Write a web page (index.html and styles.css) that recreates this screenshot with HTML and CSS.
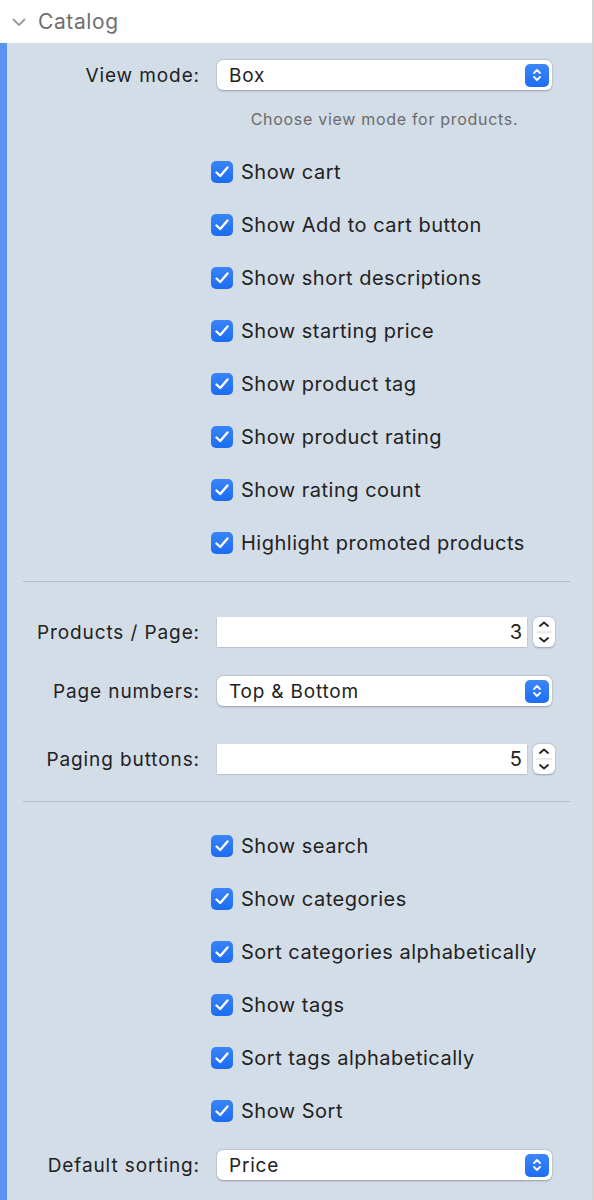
FILE: index.html
```html
<!DOCTYPE html>
<html>
<head>
<meta charset="utf-8">
<link rel="stylesheet" href="styles.css">
</head>
<body>
<div class="header">
  <svg class="disclosure" width="14" height="9" viewBox="0 0 14 9"><path d="M1.5 1.5 L7 7 L12.5 1.5" fill="none" stroke="#9b9b9b" stroke-width="1.8" stroke-linecap="round" stroke-linejoin="round"/></svg>
  <span class="title">Catalog</span>
</div>
<div class="panel">
  <div class="row first">
    <div class="label">View mode:</div>
    <div class="select"><span>Box</span><span class="popbtn"><svg width="12" height="16" viewBox="0 0 12 16"><path d="M3 6 L6 3 L9 6 M3 10 L6 13 L9 10" fill="none" stroke="#fff" stroke-width="1.8" stroke-linecap="round" stroke-linejoin="round"/></svg></span></div>
  </div>
  <div class="help">Choose view mode for products.</div>

  <div class="checks">
    <div class="check"><span class="box"><svg width="16" height="14" viewBox="0 0 16 14"><path d="M2.5 7.5 L6.2 11 L13.5 2.5" fill="none" stroke="#fff" stroke-width="2.4" stroke-linecap="round" stroke-linejoin="round"/></svg></span>Show cart</div>
    <div class="check"><span class="box"><svg width="16" height="14" viewBox="0 0 16 14"><path d="M2.5 7.5 L6.2 11 L13.5 2.5" fill="none" stroke="#fff" stroke-width="2.4" stroke-linecap="round" stroke-linejoin="round"/></svg></span>Show Add to cart button</div>
    <div class="check"><span class="box"><svg width="16" height="14" viewBox="0 0 16 14"><path d="M2.5 7.5 L6.2 11 L13.5 2.5" fill="none" stroke="#fff" stroke-width="2.4" stroke-linecap="round" stroke-linejoin="round"/></svg></span>Show short descriptions</div>
    <div class="check"><span class="box"><svg width="16" height="14" viewBox="0 0 16 14"><path d="M2.5 7.5 L6.2 11 L13.5 2.5" fill="none" stroke="#fff" stroke-width="2.4" stroke-linecap="round" stroke-linejoin="round"/></svg></span>Show starting price</div>
    <div class="check"><span class="box"><svg width="16" height="14" viewBox="0 0 16 14"><path d="M2.5 7.5 L6.2 11 L13.5 2.5" fill="none" stroke="#fff" stroke-width="2.4" stroke-linecap="round" stroke-linejoin="round"/></svg></span>Show product tag</div>
    <div class="check"><span class="box"><svg width="16" height="14" viewBox="0 0 16 14"><path d="M2.5 7.5 L6.2 11 L13.5 2.5" fill="none" stroke="#fff" stroke-width="2.4" stroke-linecap="round" stroke-linejoin="round"/></svg></span>Show product rating</div>
    <div class="check"><span class="box"><svg width="16" height="14" viewBox="0 0 16 14"><path d="M2.5 7.5 L6.2 11 L13.5 2.5" fill="none" stroke="#fff" stroke-width="2.4" stroke-linecap="round" stroke-linejoin="round"/></svg></span>Show rating count</div>
    <div class="check"><span class="box"><svg width="16" height="14" viewBox="0 0 16 14"><path d="M2.5 7.5 L6.2 11 L13.5 2.5" fill="none" stroke="#fff" stroke-width="2.4" stroke-linecap="round" stroke-linejoin="round"/></svg></span>Highlight promoted products</div>
  </div>

  <div class="sep sep1"></div>

  <div class="row r-products">
    <div class="label">Products / Page:</div>
    <div class="numfield"><div class="field">3</div><div class="stepper"><svg width="22" height="30" viewBox="0 0 22 30"><path d="M7 9 L11 5.5 L15 9 M7 21 L11 24.5 L15 21" fill="none" stroke="#222" stroke-width="1.8" stroke-linecap="round" stroke-linejoin="round"/><line x1="3" y1="15" x2="19" y2="15" stroke="#d8d8d8" stroke-width="1"/></svg></div></div>
  </div>
  <div class="row r-pagenum">
    <div class="label">Page numbers:</div>
    <div class="select"><span>Top &amp; Bottom</span><span class="popbtn"><svg width="12" height="16" viewBox="0 0 12 16"><path d="M3 6 L6 3 L9 6 M3 10 L6 13 L9 10" fill="none" stroke="#fff" stroke-width="1.8" stroke-linecap="round" stroke-linejoin="round"/></svg></span></div>
  </div>
  <div class="row r-paging">
    <div class="label">Paging buttons:</div>
    <div class="numfield"><div class="field">5</div><div class="stepper"><svg width="22" height="30" viewBox="0 0 22 30"><path d="M7 9 L11 5.5 L15 9 M7 21 L11 24.5 L15 21" fill="none" stroke="#222" stroke-width="1.8" stroke-linecap="round" stroke-linejoin="round"/><line x1="3" y1="15" x2="19" y2="15" stroke="#d8d8d8" stroke-width="1"/></svg></div></div>
  </div>

  <div class="sep sep2"></div>

  <div class="checks checks2">
    <div class="check"><span class="box"><svg width="16" height="14" viewBox="0 0 16 14"><path d="M2.5 7.5 L6.2 11 L13.5 2.5" fill="none" stroke="#fff" stroke-width="2.4" stroke-linecap="round" stroke-linejoin="round"/></svg></span>Show search</div>
    <div class="check"><span class="box"><svg width="16" height="14" viewBox="0 0 16 14"><path d="M2.5 7.5 L6.2 11 L13.5 2.5" fill="none" stroke="#fff" stroke-width="2.4" stroke-linecap="round" stroke-linejoin="round"/></svg></span>Show categories</div>
    <div class="check"><span class="box"><svg width="16" height="14" viewBox="0 0 16 14"><path d="M2.5 7.5 L6.2 11 L13.5 2.5" fill="none" stroke="#fff" stroke-width="2.4" stroke-linecap="round" stroke-linejoin="round"/></svg></span>Sort categories alphabetically</div>
    <div class="check"><span class="box"><svg width="16" height="14" viewBox="0 0 16 14"><path d="M2.5 7.5 L6.2 11 L13.5 2.5" fill="none" stroke="#fff" stroke-width="2.4" stroke-linecap="round" stroke-linejoin="round"/></svg></span>Show tags</div>
    <div class="check"><span class="box"><svg width="16" height="14" viewBox="0 0 16 14"><path d="M2.5 7.5 L6.2 11 L13.5 2.5" fill="none" stroke="#fff" stroke-width="2.4" stroke-linecap="round" stroke-linejoin="round"/></svg></span>Sort tags alphabetically</div>
    <div class="check"><span class="box"><svg width="16" height="14" viewBox="0 0 16 14"><path d="M2.5 7.5 L6.2 11 L13.5 2.5" fill="none" stroke="#fff" stroke-width="2.4" stroke-linecap="round" stroke-linejoin="round"/></svg></span>Show Sort</div>
  </div>

  <div class="row r-sort">
    <div class="label">Default sorting:</div>
    <div class="select"><span>Price</span><span class="popbtn"><svg width="12" height="16" viewBox="0 0 12 16"><path d="M3 6 L6 3 L9 6 M3 10 L6 13 L9 10" fill="none" stroke="#fff" stroke-width="1.8" stroke-linecap="round" stroke-linejoin="round"/></svg></span></div>
  </div>
</div>
</body>
</html>
```

FILE: styles.css
```css
* { box-sizing: border-box; }
html, body { margin: 0; padding: 0; }
body {
  width: 594px;
  height: 1200px;
  overflow: hidden;
  font-family: Inter, "Liberation Sans", sans-serif;
  background: #fff;
  border-right: 2px solid #d4d4d4;
}
.header {
  height: 43px;
  display: flex;
  align-items: center;
  padding-left: 12px;
  background: #fff;
}
.disclosure { margin-top: 2px; }
.title {
  margin-left: 12px;
  font-size: 21px;
  color: #6f6f6f;
  letter-spacing: 0.6px;
}
.panel {
  height: 1157px;
  background: #d3dde8;
  border-left: 7px solid #5a93f0;
  padding-top: 17px;
  color: #222;
}
.row {
  display: flex;
  align-items: center;
  height: 30px;
}
.label {
  width: 193px;
  text-align: right;
  font-size: 19px;
  letter-spacing: 0.9px;
  margin-right: 17px;
  white-space: nowrap;
}
.select {
  width: 335px;
  height: 30px;
  background: #fff;
  border-radius: 6px;
  box-shadow: 0 0.5px 2px rgba(0,0,0,0.28), 0 0 0 0.5px rgba(0,0,0,0.06);
  display: flex;
  align-items: center;
  justify-content: space-between;
  padding-left: 12px;
  padding-right: 3px;
  font-size: 19px;
  letter-spacing: 0.8px;
}
.popbtn {
  width: 24px;
  height: 23px;
  border-radius: 5px;
  background: linear-gradient(#3d86f8, #1d6ef3);
  display: flex;
  align-items: center;
  justify-content: center;
}
.help {
  margin-left: 210px;
  width: 335px;
  text-align: center;
  font-size: 16px;
  line-height: 20px;
  color: #6b6b6b;
  margin-top: 19px;
  margin-bottom: 16px;
  letter-spacing: 0.7px;
  white-space: nowrap;
}
.checks { padding-left: 204px; }
.check {
  height: 53px;
  display: flex;
  align-items: center;
  font-size: 20px;
  letter-spacing: 0.5px;
  white-space: nowrap;
}
.box {
  width: 22px;
  height: 22px;
  border-radius: 5px;
  background: linear-gradient(#3a84f7, #1b6cf2);
  margin-right: 8px;
  display: flex;
  align-items: center;
  justify-content: center;
}
.sep {
  height: 1px;
  background: #b4bcc6;
  margin-left: 16px;
  width: 547px;
}
.sep1 { margin-top: 12px; }
.r-products { margin-top: 35px; }
.r-pagenum { margin-top: 29px; }
.r-paging { margin-top: 38px; }
.sep2 { margin-top: 27px; }
.checks2 { margin-top: 17px; }
.r-sort { margin-top: 13px; }
.numfield {
  display: flex;
  align-items: center;
}
.field {
  width: 310px;
  height: 30px;
  background: #fff;
  box-shadow: 0 0.5px 1.5px rgba(0,0,0,0.3);
  text-align: right;
  font-size: 20px;
  line-height: 30px;
  padding-right: 5px;
}
.stepper {
  margin-left: 6px;
  width: 22px;
  height: 30px;
  background: #fff;
  border-radius: 6px;
  box-shadow: 0 0.5px 2px rgba(0,0,0,0.3);
}
.stepper svg { display: block; }
```
